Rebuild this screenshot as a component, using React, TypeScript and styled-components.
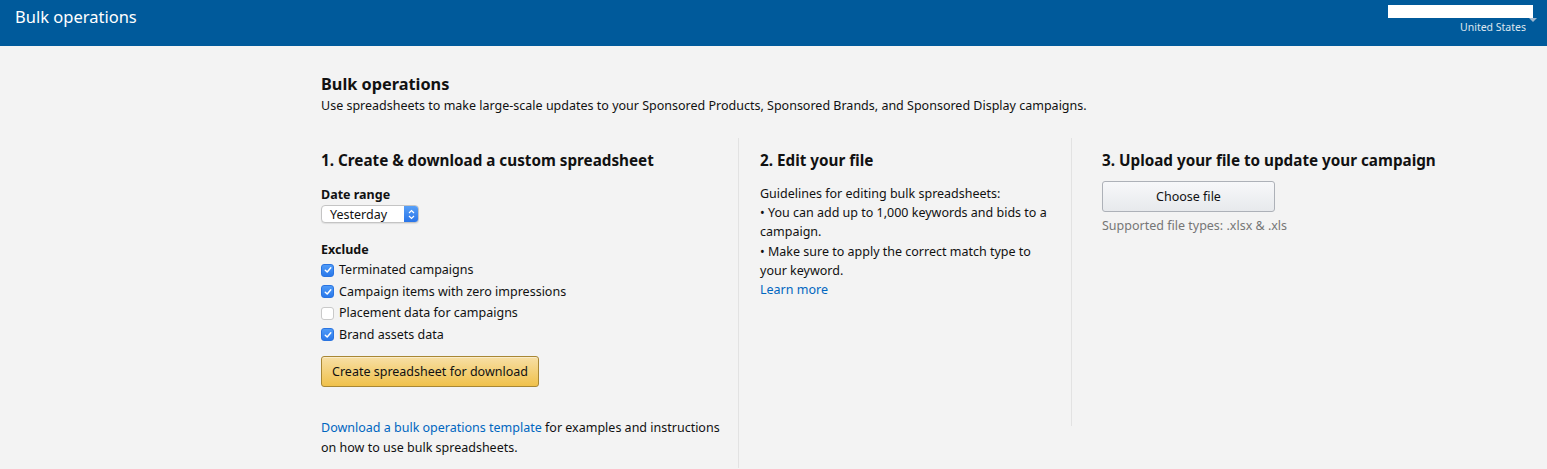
import React from "react";
import styled, { createGlobalStyle } from "styled-components";

const Global = createGlobalStyle`
  html, body { margin: 0; padding: 0; background: #f3f3f3; }
  body { font-family: "Noto Sans", "Open Sans", Arial, sans-serif; color: #111; }
  * { box-sizing: border-box; }
`;

const Header = styled.header`
  height: 46px;
  background: #005a9b;
  display: flex;
  justify-content: space-between;
  align-items: flex-start;
  padding: 0 10px 0 15px;
`;

const HeaderTitle = styled.div`
  color: #fff;
  font-size: 16.5px;
  line-height: 20px;
  padding-top: 7px;
`;

const Account = styled.div`
  display: flex;
  flex-direction: column;
  align-items: flex-end;
  padding-top: 5px;
  position: relative;
  padding-right: 11px;
`;

const NameBox = styled.div`
  width: 145px;
  height: 13px;
  background: #fff;
  margin-right: -7px;
`;

const Country = styled.div`
  color: #dfe7ef;
  font-size: 10.5px;
  line-height: 14px;
  margin-top: 2px;
`;

const Caret = styled.span`
  position: absolute;
  right: 0;
  top: 18px;
  width: 0;
  height: 0;
  border-left: 4px solid transparent;
  border-right: 4px solid transparent;
  border-top: 4px solid #9fb8cf;
`;

const Main = styled.main`
  padding: 27px 0 0 321px;
  font-size: 12.5px;
`;

const PageTitle = styled.h1`
  margin: 0;
  font-size: 16.3px;
  line-height: 22px;
  font-weight: 700;
`;

const PageDesc = styled.p`
  margin: 2px 0 0;
  line-height: 18px;
`;

const Columns = styled.div`
  display: grid;
  grid-template-columns: 418px 333px 1fr;
  margin-top: 23px;
  align-items: start;
`;

const Column = styled.section<{ $pad?: number; $border?: boolean; $minH?: number }>`
  padding-left: ${(p) => p.$pad ?? 0}px;
  border-right: ${(p) => (p.$border ? "1px solid #e2e2e2" : "none")};
  min-height: ${(p) => p.$minH ?? 0}px;
  align-self: ${(p) => (p.$minH ? "start" : "stretch")};
  padding-top: 11px;
`;

const ColTitle = styled.h2`
  margin: 0;
  font-size: 15.25px;
  line-height: 22px;
  font-weight: 700;
`;

const Label = styled.div<{ $mt: number }>`
  font-weight: 700;
  margin-top: ${(p) => p.$mt}px;
  line-height: 18px;
`;

const Select = styled.div`
  width: 98px;
  height: 18px;
  margin-top: 1px;
  border: 1px solid #c4c4c4;
  border-radius: 4px;
  background: #fff;
  display: flex;
  align-items: center;
  justify-content: space-between;
  padding-left: 8px;
  font-size: 12.5px;
  overflow: hidden;
  box-shadow: 0 1px 1px rgba(0,0,0,0.08);
`;

const SelectArrow = styled.span`
  width: 15px;
  height: 18px;
  margin-right: -1px;
  background: linear-gradient(#5aa2f8, #2672e8);
  border-radius: 0 4px 4px 0;
  display: flex;
  align-items: center;
  justify-content: center;
`;

const CheckList = styled.div`
  display: flex;
  flex-direction: column;
  gap: 3.5px;
  margin-top: 2px;
`;

const CheckRow = styled.label`
  display: flex;
  align-items: center;
  gap: 5px;
  line-height: 18px;
`;

const Box = styled.span<{ $on: boolean }>`
  width: 13px;
  height: 13px;
  border-radius: 3px;
  background: ${(p) => (p.$on ? "linear-gradient(#4f9bf8, #2a78ea)" : "#fff")};
  border: 1px solid ${(p) => (p.$on ? "#2a74e0" : "#c9c9c9")};
  display: flex;
  align-items: center;
  justify-content: center;
`;

const YellowButton = styled.button`
  margin-top: 12px;
  height: 31px;
  width: 218px;
  border: 1px solid #a88734;
  border-radius: 3px;
  background: linear-gradient(#f7dfa5, #f0c14b);
  font-family: inherit;
  font-size: 12.5px;
  color: #111;
  padding: 0;
  box-shadow: inset 0 1px 0 rgba(255,255,255,0.4);
`;

const Footnote = styled.p`
  margin: 31px 0 0;
  line-height: 20px;
  padding-bottom: 10px;
  padding-right: 14px;
`;

const Link = styled.a`
  color: #0066c0;
  text-decoration: none;
`;

const Guide = styled.div`
  margin-top: 13px;
  line-height: 19.2px;
  padding-right: 16px;
`;

const GrayButton = styled.button`
  margin-top: 10px;
  width: 173px;
  height: 31px;
  border: 1px solid #adb1b8;
  border-radius: 3px;
  background: linear-gradient(#f7f8fa, #e7e9ec);
  font-family: inherit;
  font-size: 12.5px;
  color: #111;
  display: block;
`;

const Hint = styled.div`
  color: #767676;
  margin-top: 5px;
  line-height: 18px;
`;

const Check = () => (
  <svg width="8" height="8" viewBox="0 0 8 8">
    <path d="M1.3 4.2 L3.2 6 L6.8 1.8" fill="none" stroke="#fff" strokeWidth="1.5" strokeLinecap="round" strokeLinejoin="round" />
  </svg>
);

const options = [
  { label: "Terminated campaigns", on: true },
  { label: "Campaign items with zero impressions", on: true },
  { label: "Placement data for campaigns", on: false },
  { label: "Brand assets data", on: true },
];

export default function App() {
  return (
    <>
      <Global />
      <Header>
        <HeaderTitle>Bulk operations</HeaderTitle>
        <Account>
          <NameBox />
          <Country>United States</Country>
          <Caret />
        </Account>
      </Header>
      <Main>
        <PageTitle>Bulk operations</PageTitle>
        <PageDesc>
          Use spreadsheets to make large-scale updates to your Sponsored Products, Sponsored Brands, and Sponsored Display campaigns.
        </PageDesc>
        <Columns>
          <Column $border>
            <ColTitle>1. Create &amp; download a custom spreadsheet</ColTitle>
            <Label $mt={15}>Date range</Label>
            <Select>
              <span>Yesterday</span>
              <SelectArrow>
                <svg width="7" height="11" viewBox="0 0 7 11">
                  <path d="M1 4 L3.5 1.5 L6 4 M1 7 L3.5 9.5 L6 7" fill="none" stroke="#fff" strokeWidth="1.2" />
                </svg>
              </SelectArrow>
            </Select>
            <Label $mt={18}>Exclude</Label>
            <CheckList>
              {options.map((o) => (
                <CheckRow key={o.label}>
                  <Box $on={o.on}>{o.on && <Check />}</Box>
                  {o.label}
                </CheckRow>
              ))}
            </CheckList>
            <YellowButton>Create spreadsheet for download</YellowButton>
            <Footnote>
              <Link href="#">Download a bulk operations template</Link> for examples and instructions on how to use bulk spreadsheets.
            </Footnote>
          </Column>
          <Column $pad={21} $border $minH={288}>
            <ColTitle>2. Edit your file</ColTitle>
            <Guide>
              Guidelines for editing bulk spreadsheets:
              <br />• You can add up to 1,000 keywords and bids to a campaign.
              <br />• Make sure to apply the correct match type to your keyword.
              <br />
              <Link href="#">Learn more</Link>
            </Guide>
          </Column>
          <Column $pad={30}>
            <ColTitle>3. Upload your file to update your campaign</ColTitle>
            <GrayButton>Choose file</GrayButton>
            <Hint>Supported file types: .xlsx &amp; .xls</Hint>
          </Column>
        </Columns>
      </Main>
    </>
  );
}
